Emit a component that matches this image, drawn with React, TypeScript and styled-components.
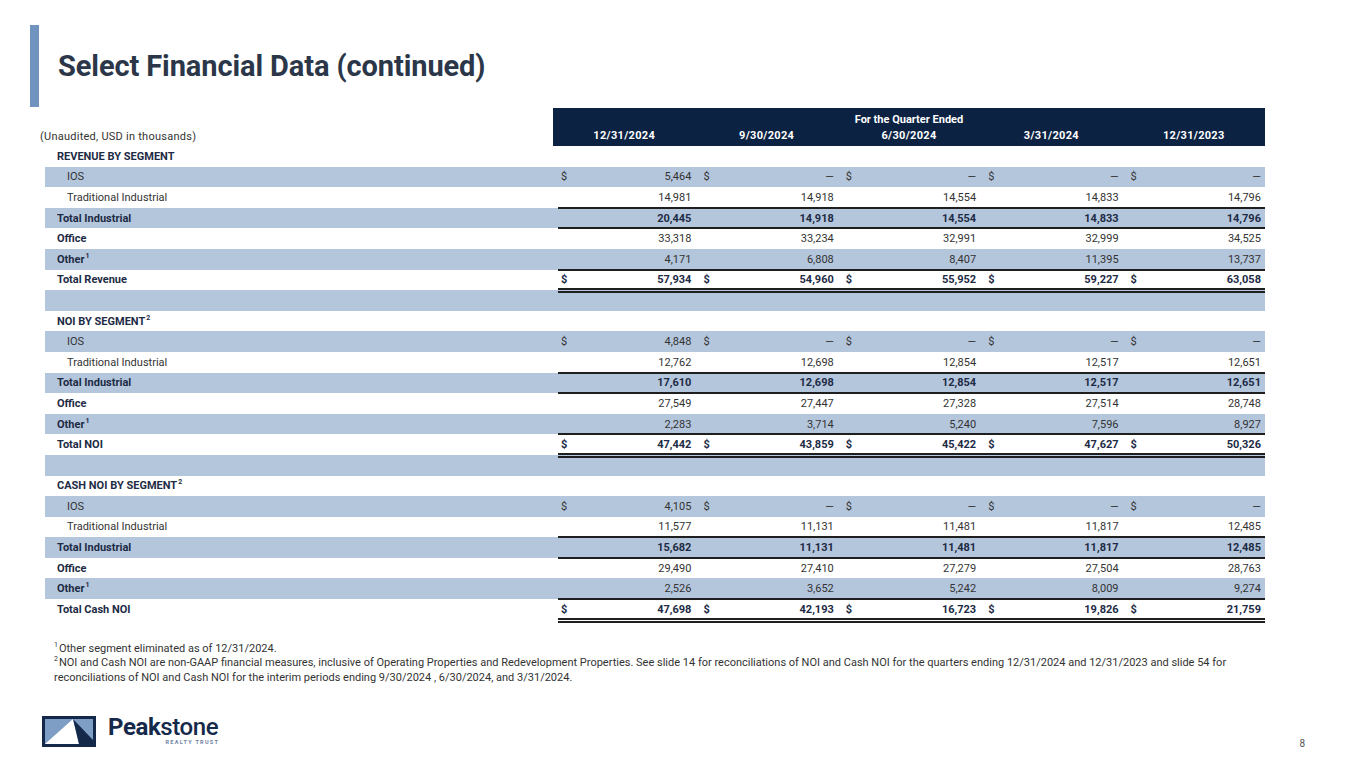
import React from 'react';
import styled, { createGlobalStyle } from 'styled-components';

const GlobalStyle = createGlobalStyle`
  html, body { margin: 0; padding: 0; background: #ffffff; }
  body { font-family: Roboto, "Liberation Sans", Arial, sans-serif; }
`;

const COLS = '508px repeat(5, 142.4px)';
const NAVY = '#0c2243';
const INK = '#1d2b45';
const TEXT = '#333333';
const BAND = '#b4c6dc';

type RowKind = 'section' | 'sub' | 'total' | 'plain' | 'grand' | 'blank';
type Rule = 'single' | 'double' | undefined;

interface RowDef {
  label?: string;
  sup?: string;
  kind: RowKind;
  values?: string[];
  dollar?: boolean;
  shaded?: boolean;
  rule?: Rule;
}

interface Section {
  title: string;
  sup?: string;
  ios: string[];
  trad: string[];
  totInd: string[];
  office: string[];
  other: string[];
  total: string[];
  totalLabel: string;
}

const DASH = '\u2014';

const sections: Section[] = [
  {
    title: 'REVENUE BY SEGMENT',
    ios: ['5,464', DASH, DASH, DASH, DASH],
    trad: ['14,981', '14,918', '14,554', '14,833', '14,796'],
    totInd: ['20,445', '14,918', '14,554', '14,833', '14,796'],
    office: ['33,318', '33,234', '32,991', '32,999', '34,525'],
    other: ['4,171', '6,808', '8,407', '11,395', '13,737'],
    total: ['57,934', '54,960', '55,952', '59,227', '63,058'],
    totalLabel: 'Total Revenue',
  },
  {
    title: 'NOI BY SEGMENT',
    sup: '2',
    ios: ['4,848', DASH, DASH, DASH, DASH],
    trad: ['12,762', '12,698', '12,854', '12,517', '12,651'],
    totInd: ['17,610', '12,698', '12,854', '12,517', '12,651'],
    office: ['27,549', '27,447', '27,328', '27,514', '28,748'],
    other: ['2,283', '3,714', '5,240', '7,596', '8,927'],
    total: ['47,442', '43,859', '45,422', '47,627', '50,326'],
    totalLabel: 'Total NOI',
  },
  {
    title: 'CASH NOI BY SEGMENT',
    sup: '2',
    ios: ['4,105', DASH, DASH, DASH, DASH],
    trad: ['11,577', '11,131', '11,481', '11,817', '12,485'],
    totInd: ['15,682', '11,131', '11,481', '11,817', '12,485'],
    office: ['29,490', '27,410', '27,279', '27,504', '28,763'],
    other: ['2,526', '3,652', '5,242', '8,009', '9,274'],
    total: ['47,698', '42,193', '16,723', '19,826', '21,759'],
    totalLabel: 'Total Cash NOI',
  },
];

const buildRows = (): RowDef[] => {
  const rows: RowDef[] = [];
  sections.forEach((s, i) => {
    rows.push({ label: s.title, sup: s.sup, kind: 'section' });
    rows.push({ label: 'IOS', kind: 'sub', values: s.ios, dollar: true, shaded: true });
    rows.push({ label: 'Traditional Industrial', kind: 'sub', values: s.trad, rule: 'single' });
    rows.push({ label: 'Total Industrial', kind: 'total', values: s.totInd, shaded: true, rule: 'single' });
    rows.push({ label: 'Office', kind: 'plain', values: s.office });
    rows.push({ label: 'Other', sup: '1', kind: 'plain', values: s.other, shaded: true, rule: 'single' });
    rows.push({ label: s.totalLabel, kind: 'grand', values: s.total, dollar: true, rule: 'double' });
    if (i < sections.length - 1) rows.push({ kind: 'blank', shaded: true });
  });
  return rows;
};

const Page = styled.div`
  width: 1365px;
  height: 768px;
  display: flex;
  flex-direction: column;
  box-sizing: border-box;
  overflow: hidden;
  background: #ffffff;
`;

const TitleRow = styled.header`
  display: flex;
  align-items: center;
  height: 82px;
  margin-top: 25px;
  padding-left: 30px;
`;

const TitleBar = styled.div`
  width: 9px;
  align-self: stretch;
  background: #7194bf;
`;

const Title = styled.h1`
  margin: 0 0 0 19px;
  font-size: 29px;
  font-weight: 700;
  color: #2b3749;
  letter-spacing: -0.1px;
`;

const Table = styled.div`
  margin: 1px 0 0 45px;
  width: 1220px;
  display: flex;
  flex-direction: column;
  font-size: 11px;
  color: ${TEXT};
`;

const HeadRow = styled.div`
  display: grid;
  grid-template-columns: ${COLS};
  height: 38px;
`;

const Unaudited = styled.div`
  align-self: end;
  padding-bottom: 3px;
  margin-left: -5px;
  letter-spacing: 0.25px;
  color: ${TEXT};
`;

const HeadBox = styled.div`
  grid-column: 2 / span 5;
  background: ${NAVY};
  color: #ffffff;
  font-weight: 700;
  display: grid;
  grid-template-columns: repeat(5, 1fr);
  grid-template-rows: 1fr 1fr;
  align-items: center;
  padding: 3px 0 2px;
`;

const QuarterLabel = styled.div`
  grid-column: 1 / -1;
  text-align: center;
`;

const DateCell = styled.div`
  text-align: center;
  letter-spacing: 0.3px;
`;

const Row = styled.div<{ $shaded?: boolean }>`
  display: grid;
  grid-template-columns: ${COLS};
  height: 20.6px;
  align-items: center;
  background: ${(p) => (p.$shaded ? BAND : 'transparent')};
`;

const Label = styled.div<{ $indent?: boolean; $bold?: boolean }>`
  padding-left: ${(p) => (p.$indent ? 22 : 12)}px;
  font-weight: ${(p) => (p.$bold ? 700 : 400)};
  color: ${(p) => (p.$bold ? INK : TEXT)};
  white-space: nowrap;
`;

const Sup = styled.sup`
  font-size: 7px;
  line-height: 0;
  vertical-align: 5px;
  margin-left: 1px;
`;

const Values = styled.div<{ $rule?: Rule }>`
  grid-column: 2 / span 5;
  align-self: stretch;
  display: grid;
  grid-template-columns: repeat(5, 1fr);
  position: relative;

  &::after {
    content: '';
    display: ${(p) => (p.$rule ? 'block' : 'none')};
    position: absolute;
    left: 5px;
    right: 0;
    box-sizing: border-box;
    bottom: ${(p) => (p.$rule === 'double' ? '-3px' : '-1px')};
    height: ${(p) => (p.$rule === 'double' ? '5px' : '2px')};
    border-top: 2px solid #1f1f1f;
    border-bottom: ${(p) => (p.$rule === 'double' ? '2px solid #1f1f1f' : '0')};
  }
`;

const ValueCell = styled.div<{ $bold?: boolean }>`
  display: flex;
  justify-content: space-between;
  align-items: center;
  padding: 0 4px 0 8px;
  font-weight: ${(p) => (p.$bold ? 700 : 400)};
  color: ${(p) => (p.$bold ? INK : TEXT)};
  white-space: nowrap;
`;

const Notes = styled.div`
  margin: 22px 0 0 54px;
  font-size: 11px;
  line-height: 14.5px;
  color: ${TEXT};
  white-space: nowrap;
`;

const NoteSup = styled.sup`
  font-size: 7px;
  line-height: 0;
  vertical-align: 5px;
  margin-right: 1px;
`;

const Footer = styled.footer`
  margin-top: auto;
  display: flex;
  align-items: flex-end;
  justify-content: space-between;
  padding: 0 60px 21px 42px;
`;

const Logo = styled.div`
  display: flex;
  align-items: center;
  gap: 12px;
`;

const Wordmark = styled.div`
  display: flex;
  flex-direction: column;
  align-items: flex-end;
  color: #15294a;
`;

const WordName = styled.div`
  font-size: 24px;
  line-height: 21px;
  letter-spacing: -0.4px;
  font-weight: 500;
`;

const WordStrong = styled.span`
  font-weight: 700;
`;

const WordSub = styled.div`
  font-size: 5.5px;
  line-height: 7px;
  letter-spacing: 1.3px;
  color: #6c82a4;
  font-weight: 700;
  margin-top: 1px;
  margin-right: -1px;
`;

const PageNum = styled.div`
  font-size: 10px;
  color: #555555;
  margin-bottom: -2px;
`;

const LogoMark = () => (
  <svg width="54" height="31" viewBox="0 0 54 31">
    <rect x="0" y="0" width="54" height="31" fill="#14284a" />
    <rect x="3" y="3" width="48" height="25" fill="#7f9ec6" />
    <polygon points="3,28 31,3 37,28" fill="#ffffff" />
    <polygon points="31,3 51,24 51,28 37,28" fill="#14284a" />
  </svg>
);

const dates = ['12/31/2024', '9/30/2024', '6/30/2024', '3/31/2024', '12/31/2023'];

export default function App() {
  const rows = buildRows();
  return (
    <Page>
      <GlobalStyle />
      <TitleRow>
        <TitleBar />
        <Title>Select Financial Data (continued)</Title>
      </TitleRow>
      <Table>
        <HeadRow>
          <Unaudited>(Unaudited, USD in thousands)</Unaudited>
          <HeadBox>
            <QuarterLabel>For the Quarter Ended</QuarterLabel>
            {dates.map((d) => (
              <DateCell key={d}>{d}</DateCell>
            ))}
          </HeadBox>
        </HeadRow>
        {rows.map((r, i) => {
          const bold = r.kind === 'section' || r.kind === 'total' || r.kind === 'plain' || r.kind === 'grand';
          const boldVals = r.kind === 'total' || r.kind === 'grand';
          return (
            <Row key={i} $shaded={r.shaded}>
              <Label $indent={r.kind === 'sub'} $bold={bold}>
                {r.label}
                {r.sup && <Sup>{r.sup}</Sup>}
              </Label>
              {r.values && (
                <Values $rule={r.rule}>
                  {r.values.map((v, j) => (
                    <ValueCell key={j} $bold={boldVals}>
                      <span>{r.dollar ? '$' : ''}</span>
                      <span>{v}</span>
                    </ValueCell>
                  ))}
                </Values>
              )}
            </Row>
          );
        })}
      </Table>
      <Notes>
        <NoteSup>1</NoteSup>Other segment eliminated as of 12/31/2024.
        <br />
        <NoteSup>2</NoteSup>NOI and Cash NOI are non-GAAP financial measures, inclusive of Operating Properties and
        Redevelopment Properties. See slide 14 for reconciliations of NOI and Cash NOI for the quarters ending 12/31/2024
        and 12/31/2023 and slide 54 for
        <br />
        reconciliations of NOI and Cash NOI for the interim periods ending 9/30/2024 , 6/30/2024, and 3/31/2024.
      </Notes>
      <Footer>
        <Logo>
          <LogoMark />
          <Wordmark>
            <WordName>
              <WordStrong>Peak</WordStrong>stone
            </WordName>
            <WordSub>REALTY TRUST</WordSub>
          </Wordmark>
        </Logo>
        <PageNum>8</PageNum>
      </Footer>
    </Page>
  );
}
